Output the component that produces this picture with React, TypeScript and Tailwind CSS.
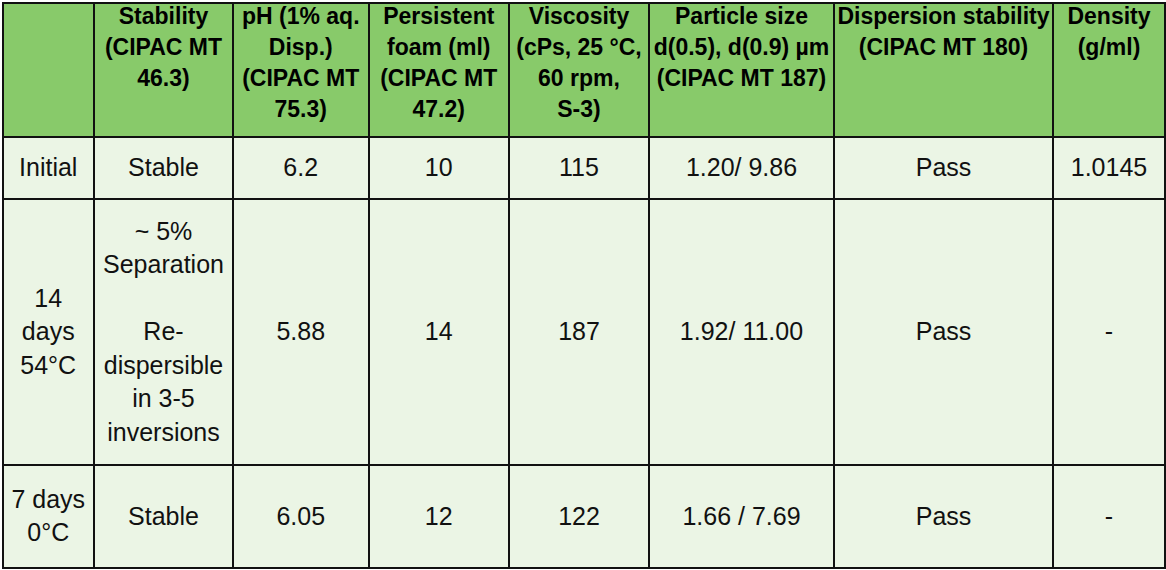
import React from "react";

const H = ({ lines }: { lines: string[] }) => (
  <th className="border-2 border-[#111] bg-[#88ca6a] align-top p-0 text-center font-bold text-[23px] leading-[31px] whitespace-nowrap text-black">
    <div className="-mt-[3px]">
      {lines.map((l, i) => (
        <React.Fragment key={i}>
          {l}
          {i < lines.length - 1 && <br />}
        </React.Fragment>
      ))}
    </div>
  </th>
);

const C = ({ lines }: { lines: string[] }) => (
  <td className="border-2 border-[#111] bg-[#ebf5e5] align-middle p-0 text-center text-[25px] leading-[33.5px] whitespace-nowrap text-[#111]">
    {lines.map((l, i) => (
      <React.Fragment key={i}>
        {l === "" ? "\u00a0" : l}
        {i < lines.length - 1 && <br />}
      </React.Fragment>
    ))}
  </td>
);

export default function App() {
  const widths = [91.5, 139, 135.5, 140.5, 140, 185, 219, 112];
  return (
    <div
      className="w-[1166px] h-[570px] bg-white pt-[1.5px] pl-[1.5px]"
      style={{ fontFamily: '"Liberation Sans", Arial, sans-serif' }}
    >
      <table className="border-collapse table-fixed w-[1163px]">
        <colgroup>
          {widths.map((w, i) => (
            <col key={i} style={{ width: w }} />
          ))}
        </colgroup>
        <tbody>
          <tr className="h-[134.5px]">
            <H lines={[""]} />
            <H lines={["Stability", "(CIPAC MT", "46.3)"]} />
            <H lines={["pH (1% aq.", "Disp.)", "(CIPAC MT", "75.3)"]} />
            <H lines={["Persistent", "foam (ml)", "(CIPAC MT", "47.2)"]} />
            <H lines={["Viscosity", "(cPs, 25 °C,", "60 rpm,", "S-3)"]} />
            <H lines={["Particle size", "d(0.5), d(0.9) µm", "(CIPAC MT 187)"]} />
            <H lines={["Dispersion stability", "(CIPAC MT 180)"]} />
            <H lines={["Density", "(g/ml)"]} />
          </tr>
          <tr className="h-[62px]">
            <C lines={["Initial"]} />
            <C lines={["Stable"]} />
            <C lines={["6.2"]} />
            <C lines={["10"]} />
            <C lines={["115"]} />
            <C lines={["1.20/ 9.86"]} />
            <C lines={["Pass"]} />
            <C lines={["1.0145"]} />
          </tr>
          <tr className="h-[266px]">
            <C lines={["14", "days", "54°C"]} />
            <C
              lines={[
                "~ 5%",
                "Separation",
                "",
                "Re-",
                "dispersible",
                "in 3-5",
                "inversions",
              ]}
            />
            <C lines={["5.88"]} />
            <C lines={["14"]} />
            <C lines={["187"]} />
            <C lines={["1.92/ 11.00"]} />
            <C lines={["Pass"]} />
            <C lines={["-"]} />
          </tr>
          <tr className="h-[102.5px]">
            <C lines={["7 days", "0°C"]} />
            <C lines={["Stable"]} />
            <C lines={["6.05"]} />
            <C lines={["12"]} />
            <C lines={["122"]} />
            <C lines={["1.66 / 7.69"]} />
            <C lines={["Pass"]} />
            <C lines={["-"]} />
          </tr>
        </tbody>
      </table>
    </div>
  );
}
